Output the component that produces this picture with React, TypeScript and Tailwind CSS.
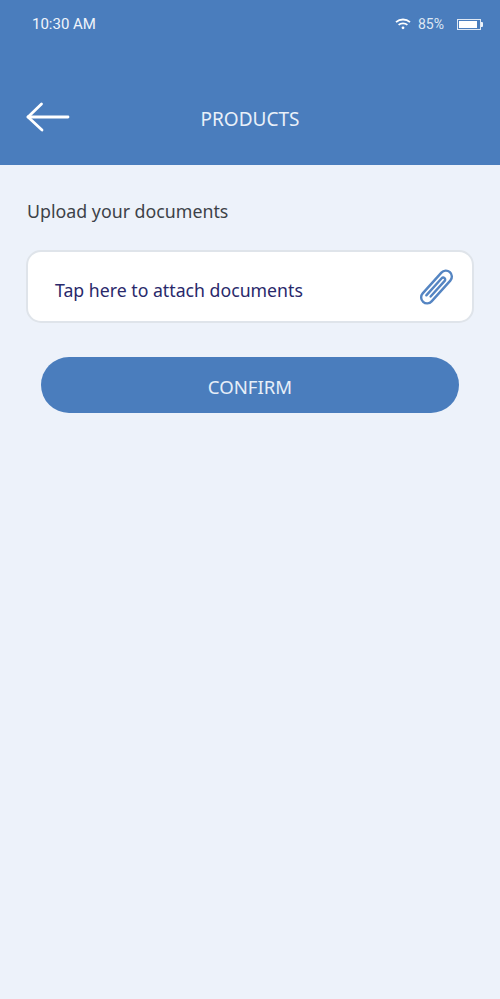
export default function App() {
  return (
    <div className="w-[500px] h-[999px] bg-[#edf2fa] flex flex-col font-['Noto_Sans',sans-serif]">
      <header className="h-[165px] bg-[#4a7dbd] flex flex-col text-white shrink-0">
        <div className="h-[48px] pl-[32px] pr-[17px] flex items-center justify-between">
          <span className="text-[15px] font-['Roboto',sans-serif] text-[#f1f5fb]">10:30 AM</span>
          <div className="flex items-center">
            <svg width="16" height="12" viewBox="0 0 16 12" className="mr-[7px]" fill="none" stroke="#fff" strokeWidth="1.8">
              <path d="M1 4.200C5 .6 11 .6 15 4.200" />
              <path d="M3.600 6.900C6 4.800 10 4.800 12.400 6.900" />
              <circle cx="8" cy="9.800" r="1.400" fill="#fff" stroke="none" />
            </svg>
            <span className="text-[14px] font-['Roboto',sans-serif] text-[#dfe8f4] mr-[13px]">85%</span>
            <div className="w-[26px] h-[12px] flex items-center">
              <div className="w-[24px] h-[11px] border border-[#dfe8f4] p-px">
                <div className="w-[18px] h-full bg-white" />
              </div>
              <div className="w-[2px] h-[5px] bg-[#eef3fa] rounded-r-[1px]" />
            </div>
          </div>
        </div>
        <div className="relative mt-[43px] h-[56px] flex items-center justify-center">
          <svg width="44" height="30" viewBox="0 0 44 30" className="absolute left-[26px] top-[11px]" fill="none" stroke="#fff" strokeWidth="2.800" strokeLinecap="round" strokeLinejoin="round">
            <path d="M42 15H2" />
            <path d="M15.500 2 2 15l14 13" />
          </svg>
          <span className="text-[19px] text-[#e9f0f9]">PRODUCTS</span>
        </div>
      </header>
      <main className="flex flex-col px-[26px]">
        <p className="mt-[33px] ml-px text-[17.800px] leading-[26px] text-[#3d4248]">Upload your documents</p>
        <div className="mt-[26px] h-[73px] bg-white border-2 border-[#dfe4ea] rounded-[15px] pl-[27px] pr-[18px] flex items-center justify-between">
          <span className="text-[17.700px] pt-[8px] text-[#29296b]">Tap here to attach documents</span>
          <svg width="36" height="38" viewBox="-18 -19 36 38" fill="none" stroke="#5585c2" strokeWidth="2.400" strokeLinecap="round" strokeLinejoin="round">
            <g transform="translate(0.500 0) rotate(42)">
              <path d="M6 -14V14a6 6 0 0 1 -12 0V-14a6 6 0 0 1 12 0" />
              <path d="M-2 13V-10a2 2 0 0 1 4 0V11" />
            </g>
          </svg>
        </div>
        <button className="mt-[34px] mx-[15px] h-[56px] pt-[4px] rounded-full bg-[#4a7dbd] text-[#e6eef8] text-[18.600px] flex items-center justify-center">
          CONFIRM
        </button>
      </main>
    </div>
  );
}
